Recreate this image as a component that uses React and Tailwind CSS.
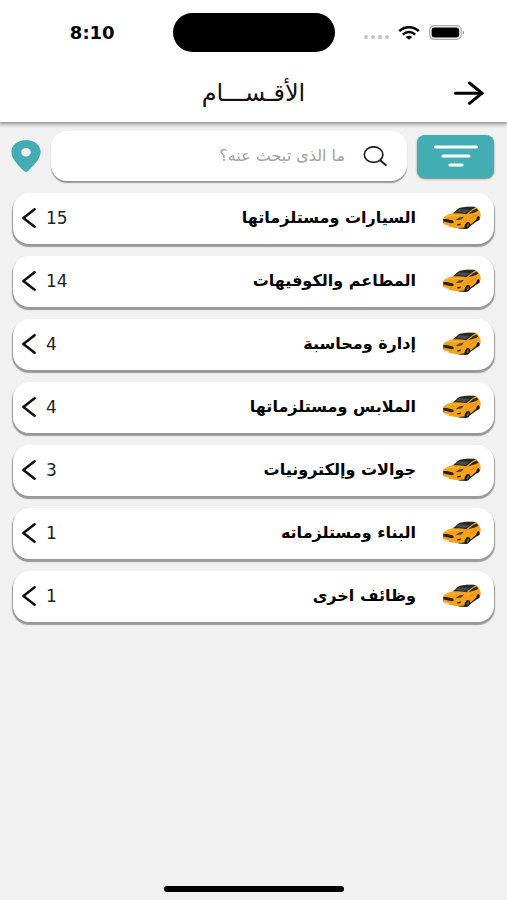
import { useState } from "react";

const CATEGORIES = [
  { name: "السيارات ومستلزماتها", count: 15 },
  { name: "المطاعم والكوفيهات", count: 14 },
  { name: "إدارة ومحاسبة", count: 4 },
  { name: "الملابس ومستلزماتها", count: 4 },
  { name: "جوالات وإلكترونيات", count: 3 },
  { name: "البناء ومستلزماته", count: 1 },
  { name: "وظائف اخرى", count: 1 },
];

/* ── Icons ── */
function WifiIcon() {
  return (
    <svg className="w-[22px] h-[14px]" viewBox="0 0 22 14" fill="none" stroke="#000" strokeWidth="2.5">
      <path d="M1.2 5.2 C6.5 0 15.5 0 20.8 5.2" />
      <path d="M4.8 8.6 C8.4 5.2 13.6 5.2 17.2 8.6" />
      <path d="M7.8 11 C9.6 9.2 12.4 9.2 14.2 11 L11 13.8Z" fill="#000" stroke="none" />
    </svg>
  );
}

function BatteryIcon() {
  return (
    <svg className="w-[36px] h-[15px]" viewBox="0 0 36 15" fill="none">
      <rect x="0.7" y="0.7" width="31.6" height="13.6" rx="4.5" stroke="#a8a8a8" strokeWidth="1.2" />
      <rect x="2.6" y="2.4" width="27.6" height="10.2" rx="3" fill="#000" />
      <path d="M33.8 5.2 C35.4 6 35.4 9 33.8 9.8Z" fill="#888" />
    </svg>
  );
}

function ArrowIcon() {
  return (
    <svg className="w-8 h-6" viewBox="0 0 32 24" fill="none" stroke="#000" strokeWidth="3" strokeLinecap="round">
      <path d="M2.5 12.2 H29" />
      <path d="M16.5 2 L29 12.2 L16.5 22.4" strokeLinejoin="round" />
    </svg>
  );
}

function FilterIcon() {
  return (
    <svg className="w-[46px] h-6" viewBox="0 0 46 24" fill="none" stroke="#fff" strokeWidth="3.2" strokeLinecap="round">
      <path d="M2.5 3 H43.5" />
      <path d="M10 12 H36" />
      <path d="M17 21 H29" />
    </svg>
  );
}

function SearchIcon() {
  return (
    <svg className="w-6 h-5 shrink-0" viewBox="0 0 24 20" fill="none" stroke="#222" strokeWidth="1.7" strokeLinecap="round">
      <ellipse cx="10.6" cy="8.6" rx="9.3" ry="7.8" />
      <path d="M17.4 14.4 L22.8 19" strokeWidth="2" />
    </svg>
  );
}

function PinIcon() {
  return (
    <svg className="w-[30px] h-8" viewBox="0 0 30 32">
      <path
        d="M15 0 C6.6 0 0.4 5 0.4 12 C0.4 19 7.6 25.6 13 31 Q15 32.8 17 31 C22.4 25.6 29.6 19 29.6 12 C29.6 5 23.4 0 15 0Z M15 8 A4.8 4.2 0 1 1 15 16.4 A4.8 4.2 0 1 1 15 8Z"
        fill="#42aeb3"
        fillRule="evenodd"
      />
    </svg>
  );
}

function ChevronIcon() {
  return (
    <svg className="w-[14px] h-5" viewBox="0 0 14 20" fill="none" stroke="#111" strokeWidth="2.5" strokeLinecap="round" strokeLinejoin="round">
      <path d="M12.6 1.2 L1.4 10 L12.6 18.8" />
    </svg>
  );
}

function CarIcon() {
  return (
    <svg className="w-10 h-6 shrink-0" viewBox="0 0 40 24">
      {/* underside */}
      <path d="M1 17 L17 22.6 L24 23 L36 14.6 L38.2 13 L34 9 L2 13Z" fill="#1c1a17" />
      {/* body */}
      <path d="M1 12 C3 9.6 7 8 10.6 7.2 L16.8 2.4 C19 0.8 30 0.2 34.2 1.2 C36.8 3 38.6 6 38.8 9.4 L38 12.4 L35.8 12.6 L28.6 18.4 L26 17 L23 18.6 L22.4 21.6 L16.4 22 C10 21.8 5.4 20.8 1.6 18.8Z" fill="#f5a11c" />
      {/* roof and glass */}
      <path d="M16.6 2.5 C19 0.9 29.6 0.4 33.8 1.2 L30 3.6 L24.2 8.2 C20.2 7.4 15 7 11.2 7.3Z" fill="#25282b" />
      <path d="M13.6 6.2 L17.2 3.6 C20 3.2 24.4 3.4 27.4 4 L23.6 7 C20.4 6.4 16.6 6 13.6 6.2Z" fill="#484c4f" />
      <path d="M26.4 8.2 L30.8 4.2 L34.8 2.6 L36.4 4.8 L33.4 6.2Z" fill="#2b2c2e" />
      {/* hood highlight and door line */}
      <path d="M4 10.6 C8 9 13.6 9 18 9.8" stroke="#ffb83d" strokeWidth="1" fill="none" />
      <path d="M27.6 12.6 L34.8 8.8" stroke="#c97f10" strokeWidth="0.6" fill="none" />
      {/* lights and grille */}
      <path d="M13.4 14.2 L17 11.6 L22 10.8 L19.4 13.4Z" fill="#4a4641" />
      <path d="M1.2 13 L4.6 13 L11 14.6 L12 16.4 L9.6 17.2 L1.4 15.4Z" fill="#27231e" />
      <path d="M2 18 L7 19.4 L7 20.8 L2.2 19.4Z" fill="#e8e3d8" />
      <path d="M15.2 18.2 L19 17.6 L18.4 19.2 L15.4 19.6Z" fill="#2a2620" />
      {/* wheels */}
      <ellipse cx="25.6" cy="19.4" rx="2.4" ry="3.4" transform="rotate(22 25.6 19.4)" fill="#151515" />
      <ellipse cx="25.8" cy="19.4" rx="1" ry="2" transform="rotate(22 25.8 19.4)" fill="#68625b" />
      <ellipse cx="36" cy="12.6" rx="1.4" ry="2.6" transform="rotate(20 36 12.6)" fill="#151515" />
    </svg>
  );
}

/* ── Status bar ── */
function StatusBar() {
  return (
    <div dir="ltr" className="grid grid-cols-[1fr_162px_1fr] items-center pt-[13px]">
      <span className="justify-self-center pl-3 text-[18px] leading-6 font-bold">8:10</span>
      <div className="h-[39px] rounded-full bg-black" />
      <div className="flex items-center pl-[29px]">
        <div className="flex gap-[3px] pt-2 mr-[9px]">
          <i className="size-1 rounded-full bg-[#c4c4c4]" />
          <i className="size-1 rounded-full bg-[#c4c4c4]" />
          <i className="size-1 rounded-full bg-[#c4c4c4]" />
          <i className="size-1 rounded-full bg-[#c4c4c4]" />
        </div>
        <WifiIcon />
        <div className="ml-[9px]">
          <BatteryIcon />
        </div>
      </div>
    </div>
  );
}

function CategoryRow({ name, count }) {
  return (
    <li>
      <button className="flex w-full h-[51px] items-center rounded-2xl bg-white pr-3 pb-[2px] pl-[9px] text-right shadow-[0_2px_1px_1px_#999]">
        <CarIcon />
        <span className="mr-[26px] flex-1 text-[16px] leading-6 font-bold">{name}</span>
        <span className="w-6 text-left text-[17px] leading-6 text-[#222]" dir="ltr">{count}</span>
        <span className="mr-[10px]">
          <ChevronIcon />
        </span>
      </button>
    </li>
  );
}

export default function App() {
  const [query, setQuery] = useState("");
  const visible = CATEGORIES.filter((c) => c.name.includes(query.trim()));

  return (
    <div dir="rtl" className="flex min-h-screen flex-col bg-[#f1f1f1] font-['DejaVu_Sans',sans-serif] text-black">
      <header className="bg-white shadow-[0_1px_4px_1px_#888]">
        <StatusBar />
        <div className="grid h-[70px] grid-cols-[1fr_auto_1fr] items-center px-[22px] pt-3">
          <button aria-label="رجوع" className="justify-self-start">
            <ArrowIcon />
          </button>
          <h1 className="text-[24px] leading-8 text-[#111]">الأقـســـام</h1>
        </div>
      </header>

      <main className="flex-1">
        <div className="flex items-center gap-[10px] pt-[9px] pr-[13px] pl-[11px]">
          <button aria-label="تصفية" className="flex h-[43px] w-[77px] items-center justify-center rounded-lg bg-[#42aeb3] shadow-[0_1px_2px_#777]">
            <FilterIcon />
          </button>
          <label className="flex h-[50px] min-w-0 flex-1 items-center gap-[18px] rounded-2xl bg-white px-5 shadow-[0_2px_1px_0_#999]">
            <SearchIcon />
            <input
              type="text"
              value={query}
              onChange={(e) => setQuery(e.target.value)}
              aria-label="بحث"
              placeholder="ما الذى تبحث عنه؟"
              className="w-full min-w-0 bg-transparent text-[16px] leading-6 outline-none placeholder:text-[#a3a3a3]"
            />
          </label>
          <button aria-label="الموقع">
            <PinIcon />
          </button>
        </div>

        <ul className="flex flex-col gap-3 px-[13px] pt-3">
          {visible.map((c) => (
            <CategoryRow key={c.name} name={c.name} count={c.count} />
          ))}
        </ul>
      </main>

      <footer className="flex justify-center pb-2">
        <div className="h-[6px] w-[180px] rounded-full bg-black" />
      </footer>
    </div>
  );
}
